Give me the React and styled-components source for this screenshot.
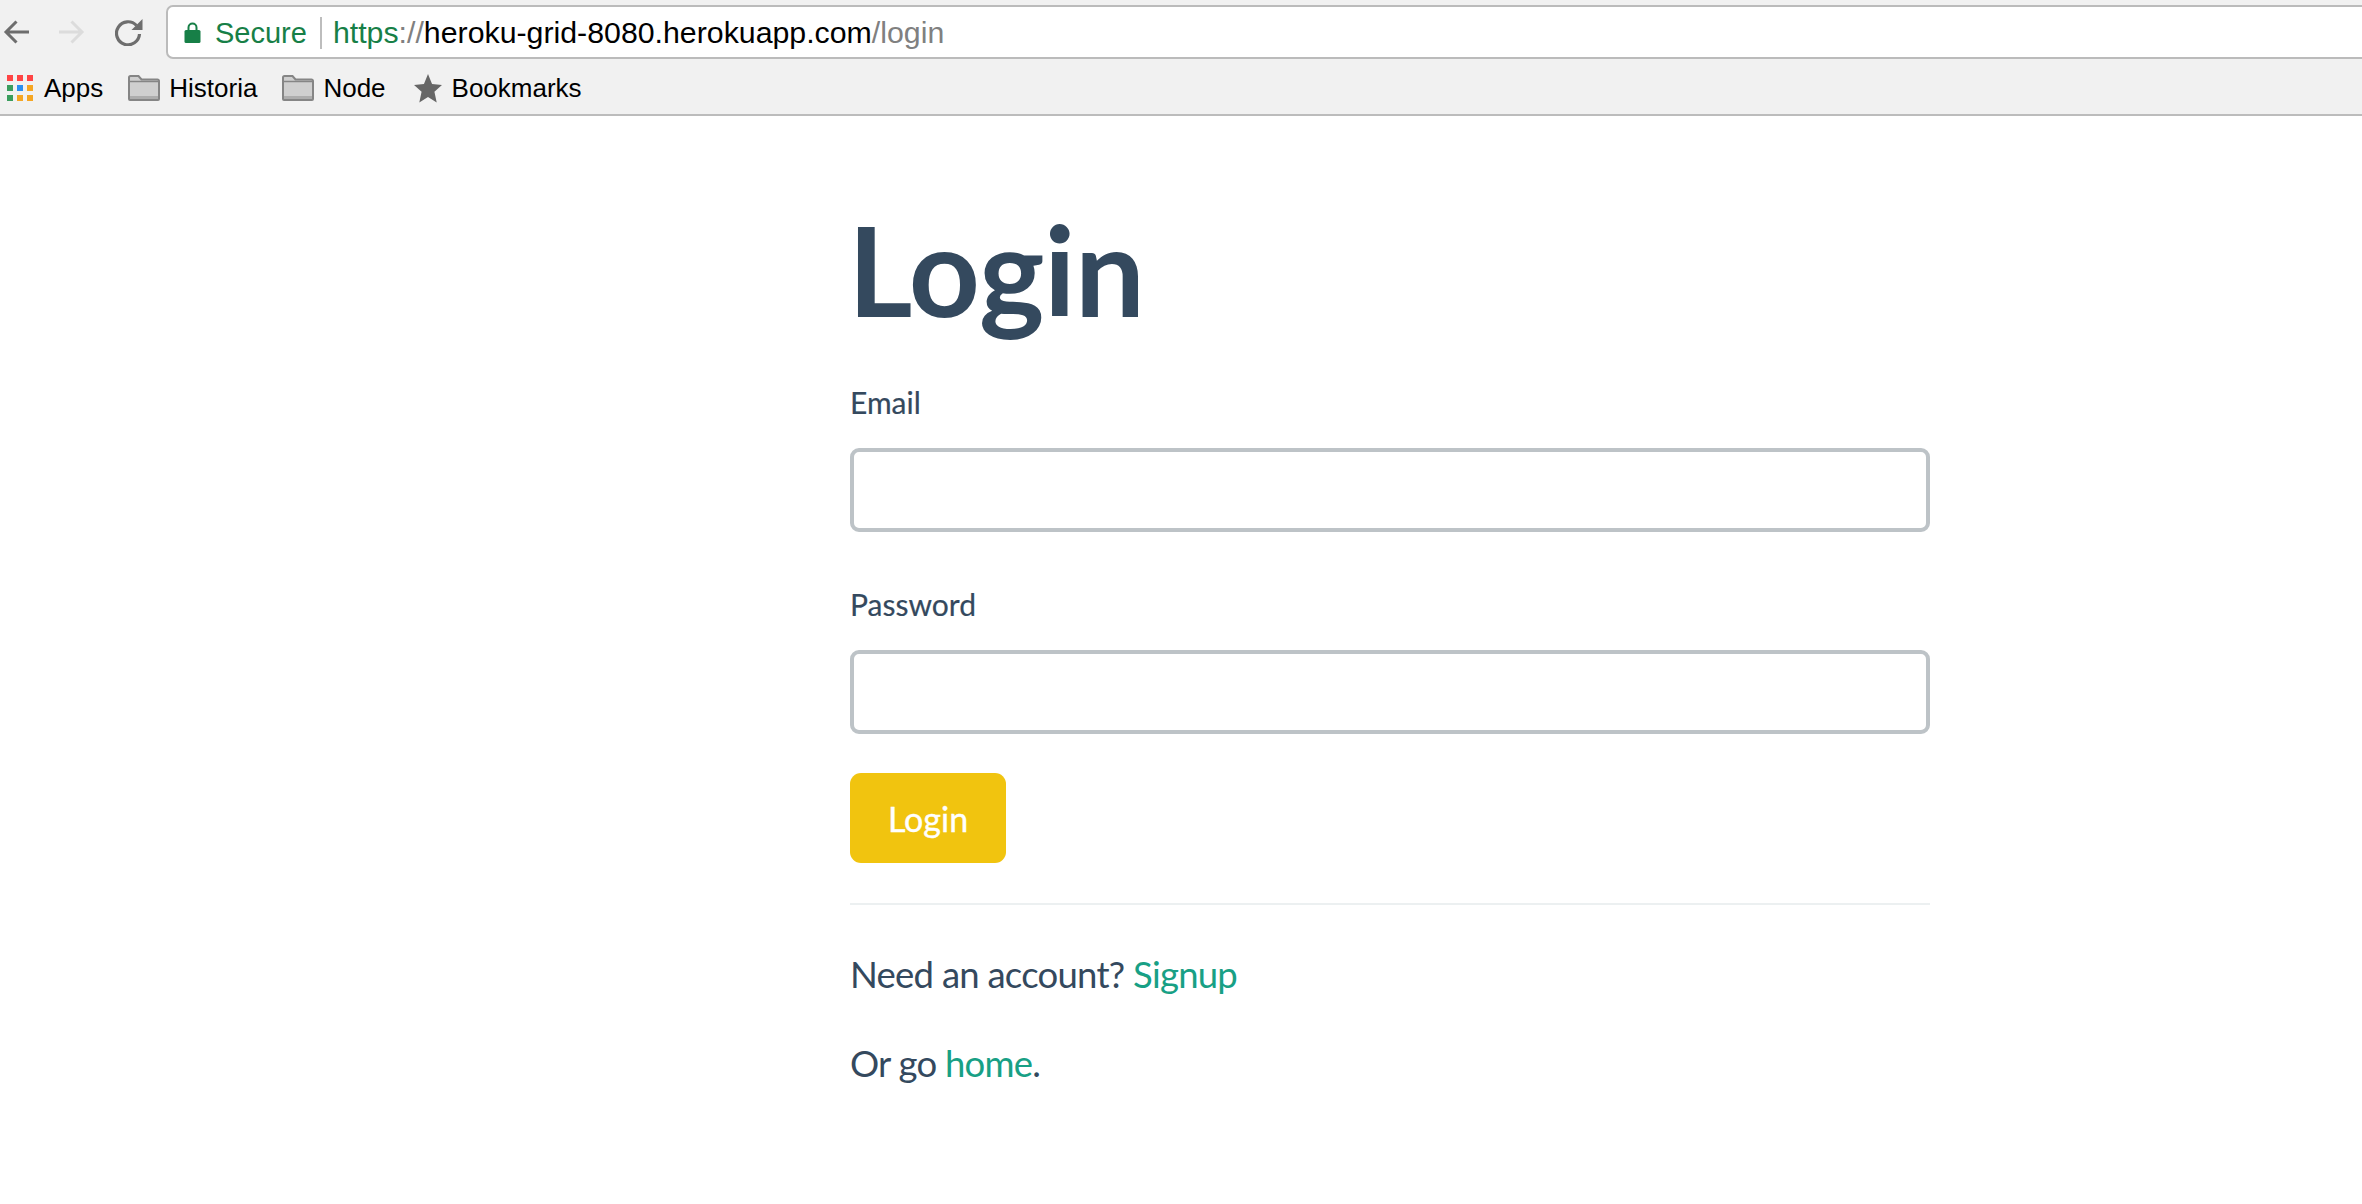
import React from "react"
import styled, { createGlobalStyle } from "styled-components"

const GlobalStyle = createGlobalStyle`
  html, body {
    margin: 0;
    padding: 0;
    background: #fff;
    overflow: hidden;
  }
  * {
    box-sizing: border-box;
  }
`

const Page = styled.div`
  width: 2362px;
  height: 1204px;
  overflow: hidden;
  font-family: Lato, "Liberation Sans", sans-serif;
  color: #34495e;
`

const Chrome = styled.header`
  height: 116px;
  background: #f1f1f1;
  border-bottom: 2px solid #bcbcbc;
  font-family: "Liberation Sans", Arial, sans-serif;
`

const NavRow = styled.div`
  display: flex;
  align-items: flex-start;
  height: 63px;
  padding-top: 5px;
`

const NavButtons = styled.div`
  display: flex;
  width: 166px;
  height: 54px;
  flex: none;
  align-items: center;
  padding-left: 3px;
  gap: 30px;
`

const AddressBar = styled.div`
  flex: 1;
  height: 54px;
  margin-right: -20px;
  display: flex;
  align-items: center;
  background: #fff;
  border: 2px solid #bbb;
  border-radius: 7px;
  padding: 1px 0 0 16px;
  font-size: 29px;
`

const SecureLabel = styled.span`
  color: #177f47;
  margin-left: 14px;
  padding-right: 13px;
  border-right: 2px solid #bdbdbd;
  line-height: 32px;
`

const Url = styled.span`
  margin-left: 11px;
  color: #000;
  font-size: 30.3px;
`

const UrlPart = styled.span`
  color: ${(p) => p.$color};
`

const BookmarkRow = styled.nav`
  display: flex;
  align-items: center;
  height: 50px;
  padding-left: 7px;
  font-size: 26px;
  color: #000;
`

const Bookmark = styled.span`
  display: flex;
  align-items: center;
  gap: ${(p) => p.$gap || 9}px;
  margin-right: ${(p) => p.$after || 25}px;
`

const Main = styled.main`
  width: 1080px;
  margin-left: 850px;
`

const Title = styled.h1`
  margin: 0 0 21px -2px;
  padding-top: 63px;
  font-size: 124px;
  line-height: 180px;
  font-weight: 700;
  letter-spacing: -0.5px;
`

const Field = styled.div`
  display: flex;
  flex-direction: column;
  margin-top: ${(p) => p.$top}px;
`

const Label = styled.label`
  font-size: 30px;
  line-height: 44px;
  margin-bottom: 24px;
  -webkit-text-stroke: 0.2px #34495e;
`

const Input = styled.input`
  width: 100%;
  height: 84px;
  background: #fff;
  border: 4px solid #bdc3c7;
  border-radius: 9px;
  outline: none;
`

const SubmitButton = styled.button`
  display: block;
  width: 156px;
  height: 90px;
  margin-top: 39px;
  border: 0;
  border-radius: 11px;
  background: #f1c40f;
  color: #fff;
  font-family: inherit;
  font-size: 34px;
  -webkit-text-stroke: 0.4px #fff;
`

const Rule = styled.hr`
  margin: 40px 0 0;
  border: 0;
  border-top: 2px solid #ecf0f1;
`

const Note = styled.p`
  margin: ${(p) => p.$top}px 0 0;
  font-size: 36.5px;
  letter-spacing: -0.75px;
  line-height: 54px;
`

const Link = styled.a`
  color: #18a085;
  text-decoration: none;
`

const BackIcon = ({ color }) => (
  <svg width="26" height="24" viewBox="0 0 26 24" fill="none" stroke={color} strokeWidth="3">
    <path d="M26 12H3M13.5 1.5L3 12l10.5 10.5" />
  </svg>
)

const ForwardIcon = ({ color }) => (
  <svg width="26" height="24" viewBox="0 0 26 24" fill="none" stroke={color} strokeWidth="3">
    <path d="M0 12h23M12.5 1.5L23 12 12.5 22.5" />
  </svg>
)

const ReloadIcon = () => (
  <svg width="28" height="28" viewBox="0 0 28 28">
    <path d="M21.5 7.5A11.5 11.5 0 1 0 24.5 16" fill="none" stroke="#6e6e6e" strokeWidth="3.2" />
    <path d="M27.5 1v11H16.5z" fill="#6e6e6e" />
  </svg>
)

const LockIcon = () => (
  <svg width="17" height="21" viewBox="0 0 17 21">
    <path d="M4.5 9V5.5a4 4 0 0 1 8 0V9" fill="none" stroke="#177f47" strokeWidth="2" />
    <rect x="0.5" y="8" width="16" height="13" rx="1.5" fill="#177f47" />
  </svg>
)

const appColors = ["#f44", "#f44", "#f44", "#3a9d5d", "#2b8ff0", "#f5a623", "#3a9d5d", "#f5a623", "#f5a623"]

const AppsIcon = () => (
  <svg width="26" height="26" viewBox="0 0 26 26">
    {appColors.map((c, i) => (
      <rect key={i} x={(i % 3) * 10} y={Math.floor(i / 3) * 10} width="6" height="6" fill={c} />
    ))}
  </svg>
)

const FolderIcon = () => (
  <svg width="32" height="26" viewBox="0 0 32 26">
    <path d="M1 24V2.5A1.5 1.5 0 0 1 2.5 1h8l3 3.5h16A1.5 1.5 0 0 1 31 6v18a1 1 0 0 1-1 1H2a1 1 0 0 1-1-1z" fill="#cfcfcf" stroke="#858585" strokeWidth="2" />
    <path d="M2 6.5h28" stroke="#858585" strokeWidth="1.5" />
    <path d="M2 21h28v3H2z" fill="#adadad" />
  </svg>
)

const StarIcon = () => (
  <svg width="30" height="29" viewBox="0 0 28 28">
    <path d="M14 0l3.9 9.6 9.6.9-7.3 6.7 2.2 10.3L14 22.2l-8.4 5.3 2.2-10.3L.5 10.5l9.6-.9z" fill="#666" />
  </svg>
)

export default function App() {
  return (
    <>
      <GlobalStyle />
      <Page>
        <Chrome>
          <NavRow>
            <NavButtons>
              <BackIcon color="#6e6e6e" />
              <ForwardIcon color="#dcdcdc" />
              <ReloadIcon />
            </NavButtons>
            <AddressBar>
              <LockIcon />
              <SecureLabel>Secure</SecureLabel>
              <Url>
                <UrlPart $color="#177f47">https</UrlPart>
                <UrlPart $color="#808080">://</UrlPart>
                heroku-grid-8080.herokuapp.com
                <UrlPart $color="#808080">/login</UrlPart>
              </Url>
            </AddressBar>
          </NavRow>
          <BookmarkRow>
            <Bookmark $after={25} $gap={11}><AppsIcon />Apps</Bookmark>
            <Bookmark><FolderIcon />Historia</Bookmark>
            <Bookmark $after={27}><FolderIcon />Node</Bookmark>
            <Bookmark><StarIcon />Bookmarks</Bookmark>
          </BookmarkRow>
        </Chrome>
        <Main>
          <Title>Login</Title>
          <form>
            <Field $top={0}>
              <Label>Email</Label>
              <Input type="email" />
            </Field>
            <Field $top={50}>
              <Label>Password</Label>
              <Input type="password" />
            </Field>
            <SubmitButton type="button">Login</SubmitButton>
          </form>
          <Rule />
          <Note $top={42}>Need an account? <Link href="#">Signup</Link></Note>
          <Note $top={35}>Or go <Link href="#">home</Link>.</Note>
        </Main>
      </Page>
    </>
  )
}
